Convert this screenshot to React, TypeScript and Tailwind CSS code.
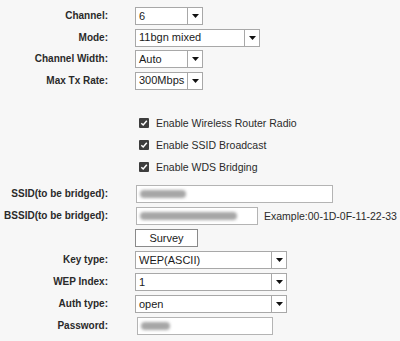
import React from "react";

function Arrow() {
  return (
    <svg width="7" height="4" viewBox="0 0 7 4">
      <path d="M0 0H7L3.5 4Z" fill="#111" />
    </svg>
  );
}

function Select({ w, value }: { w: string; value: string }) {
  return (
    <div className={`flex h-[18px] border border-[#a8a8a8] bg-white ${w}`}>
      <div className="flex flex-1 items-center pl-[3px] text-[11px] leading-none text-[#1a1a1a]">{value}</div>
      <div className="flex w-[15px] items-center justify-center border-l border-[#a8a8a8] bg-white">
        <Arrow />
      </div>
    </div>
  );
}

function Blob({ w }: { w: string }) {
  return <div className={`h-[8px] rounded-sm bg-[#a6a6a6] blur-[1.5px] ${w}`} />;
}

function TextBox({ w, blob }: { w: string; blob: string }) {
  return (
    <div className={`flex h-[18px] items-center border border-[#b4b4b4] bg-white pl-[3px] ${w}`}>
      <Blob w={blob} />
    </div>
  );
}

function Row({ label, children, ml = "ml-[27px]" }: { label: string; children: React.ReactNode; ml?: string }) {
  return (
    <div className="flex h-[18px] items-center">
      <div className="w-[108px] shrink-0 text-right text-[10px] font-bold leading-none text-[#2a2a2a]">{label}</div>
      <div className={`flex items-center ${ml}`}>{children}</div>
    </div>
  );
}

function Check({ label }: { label: string }) {
  return (
    <div className="flex h-[22px] items-center pl-[139px]">
      <div className="flex h-[10px] w-[10px] items-center justify-center rounded-[1px] bg-[#3d3d3d]">
        <svg width="8" height="8" viewBox="0 0 8 8">
          <path d="M1.3 4.2L3.2 6L6.8 1.8" stroke="#fff" strokeWidth="1.5" fill="none" />
        </svg>
      </div>
      <span className="ml-[7px] text-[10.5px] leading-none text-[#2a2a2a]">{label}</span>
    </div>
  );
}

export default function App() {
  return (
    <div
      className="h-[341px] w-[400px] overflow-hidden bg-[#f7f7f7] pt-[7px]"
      style={{ fontFamily: '"Liberation Sans", Arial, sans-serif' }}
    >
      <div className="flex flex-col gap-[3.5px]">
        <Row label="Channel:">
          <Select w="w-[68px]" value="6" />
        </Row>
        <Row label="Mode:">
          <Select w="w-[125px]" value="11bgn mixed" />
        </Row>
        <Row label="Channel Width:">
          <Select w="w-[68px]" value="Auto" />
        </Row>
        <Row label="Max Tx Rate:">
          <Select w="w-[68px]" value="300Mbps" />
        </Row>
      </div>
      <div className="mt-[22.5px] flex flex-col">
        <Check label="Enable Wireless Router Radio" />
        <Check label="Enable SSID Broadcast" />
        <Check label="Enable WDS Bridging" />
      </div>
      <div className="mt-[7px] flex flex-col gap-[4px]">
        <Row label="SSID(to be bridged):" ml="ml-[28px]">
          <TextBox w="w-[197px]" blob="w-[46px]" />
        </Row>
        <Row label="BSSID(to be bridged):" ml="ml-[28px]">
          <TextBox w="w-[122px]" blob="w-[97px]" />
          <span className="ml-[6px] text-[10.5px] leading-none text-[#2a2a2a]">Example:00-1D-0F-11-22-33</span>
        </Row>
        <Row label="">
          <div className="flex h-[18px] w-[63px] items-center justify-center border border-[#8a8a8a] bg-white text-[11px] leading-none text-[#1a1a1a]">
            Survey
          </div>
        </Row>
        <Row label="Key type:">
          <Select w="w-[152px]" value="WEP(ASCII)" />
        </Row>
        <Row label="WEP Index:">
          <Select w="w-[152px]" value="1" />
        </Row>
        <Row label="Auth type:">
          <Select w="w-[152px]" value="open" />
        </Row>
        <Row label="Password:" ml="ml-[29px]">
          <TextBox w="w-[136px]" blob="w-[29px]" />
        </Row>
      </div>
    </div>
  );
}
